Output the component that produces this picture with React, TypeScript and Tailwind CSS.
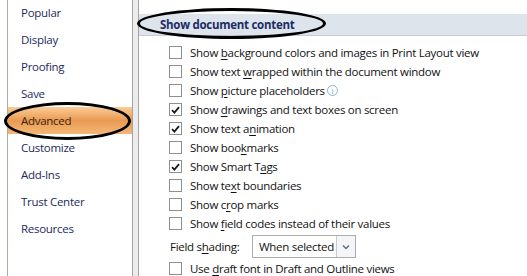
import type { ReactNode } from 'react'

const navItems = ['Popular', 'Display', 'Proofing', 'Save', 'Advanced', 'Customize', 'Add-Ins', 'Trust Center', 'Resources']

type Row = { pre: string; key: string; post: string; checked?: boolean; info?: boolean }

const rows: Row[] = [
  { pre: 'Show ', key: 'b', post: 'ackground colors and images in Print Layout view' },
  { pre: 'Show text ', key: 'w', post: 'rapped within the document window' },
  { pre: 'Show ', key: 'p', post: 'icture placeholders', info: true },
  { pre: 'Show ', key: 'd', post: 'rawings and text boxes on screen', checked: true },
  { pre: 'Show text a', key: 'n', post: 'imation', checked: true },
  { pre: 'Show boo', key: 'k', post: 'marks' },
  { pre: 'Show Smart T', key: 'a', post: 'gs', checked: true },
  { pre: 'Show te', key: 'x', post: 't boundaries' },
  { pre: 'Show c', key: 'r', post: 'op marks' },
  { pre: 'Show ', key: 'f', post: 'ield codes instead of their values' },
]

function Checkbox({ checked }: { checked?: boolean }) {
  return (
    <span className="flex h-[13px] w-[13px] shrink-0 items-center justify-center border border-[#8e8f8f] bg-white">
      {checked && (
        <svg width="9" height="8" viewBox="0 0 9 8">
          <path d="M1 4.2 L3.4 6.6 L8 1.2" fill="none" stroke="#1c1c1c" strokeWidth="1.8" />
        </svg>
      )}
    </span>
  )
}

function Label({ pre, k, post }: { pre: string; k: string; post: string }) {
  return (
    <span className="whitespace-nowrap">
      {pre}
      <span className="underline underline-offset-2">{k}</span>
      {post}
    </span>
  )
}

function Oval({ className }: { className: string }) {
  return <div className={`pointer-events-none absolute rounded-[50%] border-[3px] border-black ${className}`} />
}

function Option({ row }: { row: Row }): ReactNode {
  return (
    <div className="flex h-[19px] items-center gap-[8px] pl-[30px]">
      <Checkbox checked={row.checked} />
      <Label pre={row.pre} k={row.key} post={row.post} />
      {row.info && (
        <span className="-ml-[6px] flex h-[11px] w-[11px] items-center justify-center rounded-full border border-[#8fb3d9] text-[8px] leading-none text-[#6f9bcf]">
          i
        </span>
      )}
    </div>
  )
}

export default function App() {
  return (
    <div
      className="relative flex h-[276px] w-[527px] overflow-hidden bg-white text-[11.5px] tracking-[-0.28px] text-[#111]"
      style={{ fontFamily: '"Open Sans", "Noto Sans", sans-serif' }}
    >
      <div className="w-[7px] shrink-0 bg-white" />
      <div className="w-px shrink-0 bg-[#9fb39f]" />
      {/* sidebar */}
      <nav className="w-[125px] shrink-0 border-r border-[#a3a3a3] bg-white">
        <ul className="-mt-px">
          {navItems.map((item) => (
            <li
              key={item}
              className={
                item === 'Advanced'
                  ? 'flex h-[27px] items-center bg-gradient-to-b from-[#f9cd96] via-[#e99a52] to-[#f3b878] pl-[13px] text-[#3a2410]'
                  : 'flex h-[27px] items-center pl-[13px] text-[#1d2a5e]'
              }
            >
              {item}
            </li>
          ))}
        </ul>
      </nav>
      <div className="w-[5px] shrink-0 bg-[#ececec]" />
      {/* content */}
      <main className="flex-1 border-l border-[#a3a3a3] bg-white">
        <div className="mt-[14px] flex h-[22px] items-center border-b border-[#c5ccd3] bg-[#dde4ec] pl-[21px] font-bold text-[#1b2c66]">
          Show document content
        </div>
        <div className="mt-[7px]">
          {rows.map((row) => (
            <Option key={row.pre + row.key} row={row} />
          ))}
          <div className="mt-[2px] flex h-[23px] items-center pl-[31px]">
            <span className="w-[82px]">
              <Label pre="Field s" k="h" post="ading:" />
            </span>
            <div className="flex h-[23px] w-[104px] items-center border border-[#abadb3] bg-white">
              <span className="flex-1 whitespace-nowrap pl-[6px]">When selected</span>
              <span className="flex h-full w-[19px] items-center justify-center border-l border-[#c8cbd0] bg-[#f4f5f7]">
                <svg width="8" height="6" viewBox="0 0 8 6">
                  <path d="M1 1.5 L4 4.5 L7 1.5" fill="none" stroke="#5a6f8c" strokeWidth="1.5" />
                </svg>
              </span>
            </div>
          </div>
          <div className="mt-[1px]">
            <Option row={{ pre: 'Use ', key: 'd', post: 'raft font in Draft and Outline views' }} />
          </div>
        </div>
      </main>
      <Oval className="left-[4px] top-[102px] h-[38px] w-[127px]" />
      <Oval className="left-[137px] top-[8px] h-[31px] w-[189px]" />
    </div>
  )
}
